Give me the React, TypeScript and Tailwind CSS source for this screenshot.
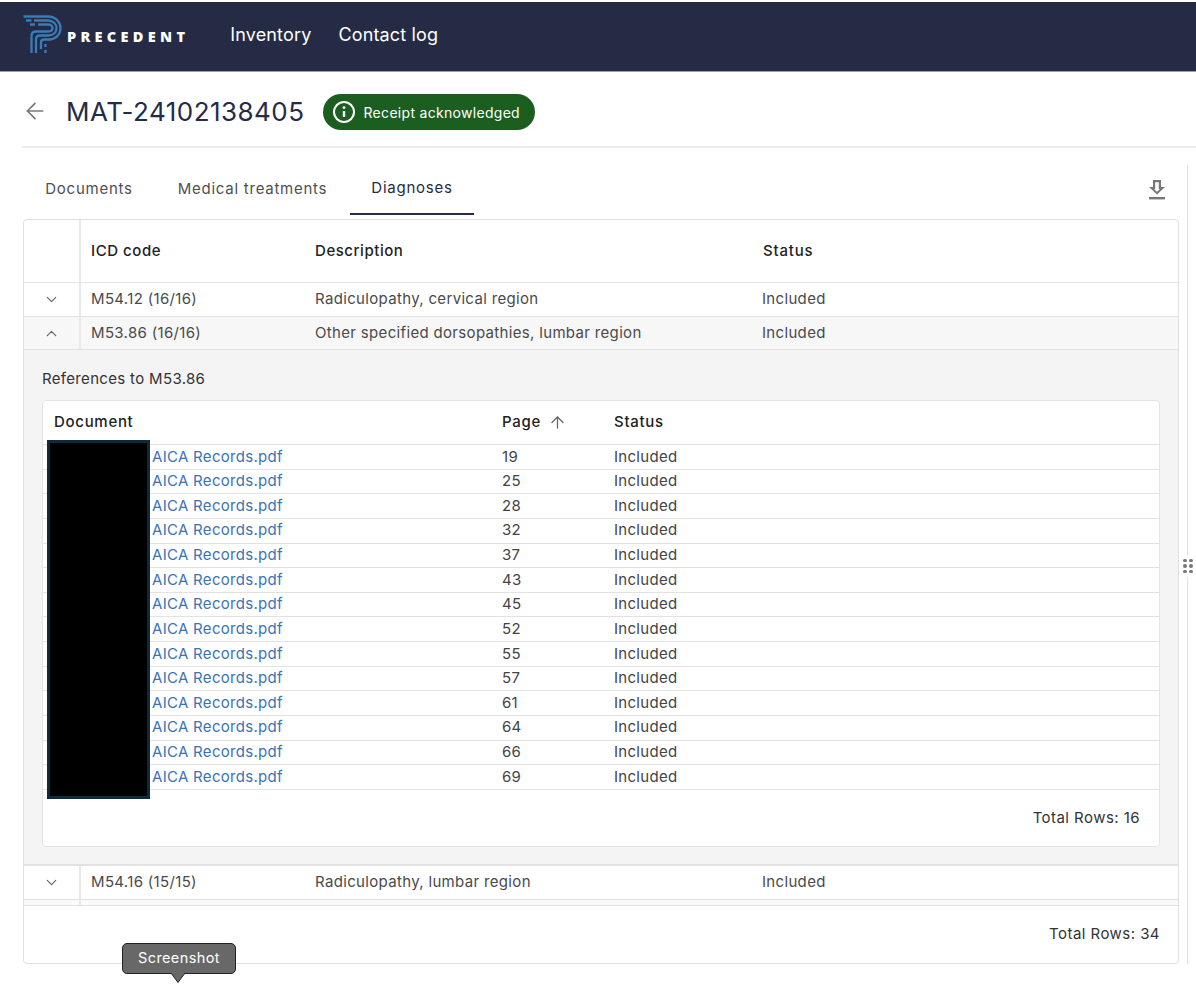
import React from "react";
import { ArrowLeft, ArrowUp, ChevronDown, ChevronUp } from "lucide-react";

const pages = [19, 25, 28, 32, 37, 43, 45, 52, 55, 57, 61, 64, 66, 69];

function Logo() {
  return (
    <svg width="40" height="40" viewBox="0 0 40 40" fill="none" stroke="#3b7cb8" strokeWidth="2.3" className="mb-[3px] shrink-0">
      <path d="M1.5 1.5H26C33.5 1.5 38.5 7 38.5 13C38.5 20 33 24.5 27 24.5H22C20 24.5 19 25.5 19 27.5V34" />
      <path d="M12 5.5H26C31 5.5 34.5 9 34.5 13C34.5 17.5 31 20.5 26 20.5H18C15.5 20.5 14 22 14 24.5V38" />
      <path d="M16 9.5H26C28.5 9.5 30.5 11 30.5 13C30.5 15.5 28.5 16.5 26 16.5H14C11 16.5 9.5 18.5 9.5 21V38" />
      <path d="M4 5.5H9.5M8 9.5H13M23.5 29V32M23.5 35V38" />
    </svg>
  );
}

function OuterRow({ code, desc, open }: { code: string; desc: string; open?: boolean }) {
  return (
    <div className={`grid grid-cols-[55px_2px_234px_447px_1fr] items-center border-b border-[#e2e2e2] text-[15px] tracking-[0.33px] text-[#4a4a4a] ${open ? "h-[33px] bg-[#f7f7f7]" : "h-[34px] bg-white"}`}>
      <div className="flex justify-center pr-[1px] text-[#666666]">
        {open ? <ChevronUp size={17} strokeWidth={1.7} /> : <ChevronDown size={17} strokeWidth={1.7} />}
      </div>
      <div className="h-full bg-[#e9e9e9]" />
      <div className="pl-[10px]">{code}</div>
      <div>{desc}</div>
      <div>Included</div>
    </div>
  );
}

export default function App() {
  return (
    <div className="relative h-[984px] w-[1196px] overflow-hidden bg-white pt-[2px] font-['Inter',sans-serif] text-[#222222]">
      <header className="flex h-[70px] items-center border-b border-[#9aa0ac] bg-[#252b45] pl-[22px]">
        <Logo />
        <span className="ml-[5px] font-['Open_Sans',sans-serif] text-[14.5px] font-extrabold tracking-[4.3px] text-white">PRECEDENT</span>
        <nav className="mb-[4px] ml-[41px] flex gap-[27px] text-[18px] tracking-[0.15px] text-white">
          <span>Inventory</span>
          <span>Contact log</span>
        </nav>
      </header>

      <div className="ml-[22px] flex h-[76px] items-center border-b-2 border-[#ececec] pt-[4px]">
        <ArrowLeft size={26} strokeWidth={1.6} className="text-[#777777]" />
        <h1 className="ml-[18px] text-[26px] tracking-[0.47px] text-[#252b45]">MAT-24102138405</h1>
        <div className="ml-[18px] mt-[2px] flex h-[36px] w-[212px] items-center rounded-full bg-[#1b5e20] pl-[9px] text-[14px] tracking-[0.3px] text-white">
          <svg width="24" height="24" viewBox="0 0 24 24" fill="none" stroke="white" strokeWidth="2">
            <circle cx="12" cy="12" r="10" />
            <path d="M12 11V17" strokeWidth="2.4" />
            <circle cx="12" cy="7.6" r="1.4" fill="white" stroke="none" />
          </svg>
          <span className="ml-[8px]">Receipt acknowledged</span>
        </div>
      </div>

      <div className="ml-[23px] w-[1156px]">
        <div className="flex h-[67px] items-stretch text-[15px] tracking-[0.75px] text-[#4f4f4f]">
          <div className="flex w-[132px] items-center justify-center pt-[16px]">Documents</div>
          <div className="flex w-[195px] items-center justify-center pt-[16px]">Medical treatments</div>
          <div className="flex w-[124px] items-center justify-center border-b-2 border-[#252b45] pt-[16px] text-[#252b45]">Diagnoses</div>
          <div className="ml-auto flex w-[44px] items-center justify-center pt-[16px] text-[#777777]">
            <svg width="20" height="22" viewBox="0 0 20 22" fill="#777777">
              <path d="M6 1H14V8H18L10 15.5L2 8H6ZM8.2 3.2V10.2H7L10 12.7L13 10.2H11.8V3.2Z" fillRule="evenodd" />
              <rect x="2" y="18" width="16" height="2.4" />
            </svg>
          </div>
        </div>

        <div className="mt-[4px] h-[745px] overflow-hidden rounded-[4px] border border-[#e0e0e0] bg-white">
          <div className="grid h-[63px] grid-cols-[55px_2px_234px_447px_1fr] items-center border-b border-[#e2e2e2] text-[15px] font-medium tracking-[0.55px] text-[#222222]">
            <div />
            <div className="h-full bg-[#e9e9e9]" />
            <div className="pl-[10px]">ICD code</div>
            <div>Description</div>
            <div className="pl-[1px] tracking-[0.8px]">Status</div>
          </div>
          <OuterRow code="M54.12 (16/16)" desc="Radiculopathy, cervical region" />
          <OuterRow code="M53.86 (16/16)" desc="Other specified dorsopathies, lumbar region" open />

          <div className="h-[516px] border-b-2 border-[#e2e2e2] bg-[#f4f4f4] px-[18px] pt-[20px]">
            <div className="text-[15px] leading-[18px] tracking-[0.33px] text-[#333333]">References to M53.86</div>
            <div className="mt-[12px] h-[447px] w-[1118px] rounded-[4px] border border-[#e4e4e4] bg-white">
              <div className="grid h-[44px] grid-cols-[448px_112px_1fr] items-center border-b border-[#e2e2e2] pl-[11px] text-[15px] font-medium tracking-[0.7px]">
                <div>Document</div>
                <div className="flex items-center gap-[7px]">
                  Page <ArrowUp size={19} strokeWidth={1.6} className="text-[#666666]" />
                </div>
                <div>Status</div>
              </div>
              {pages.map((p) => (
                <div key={p} className="grid h-[24.64px] grid-cols-[448px_112px_1fr] items-center border-b border-[#e2e2e2] pl-[11px] text-[15px] tracking-[0.3px] text-[#444444]">
                  <div className="pl-[98px] text-[#3a74b4]">AICA Records.pdf</div>
                  <div>{p}</div>
                  <div>Included</div>
                </div>
              ))}
              <div className="flex h-[57px] items-center justify-end pr-[19px] text-[15px] tracking-[0.45px] text-[#333333]">Total Rows: 16</div>
            </div>
          </div>

          <OuterRow code="M54.16 (15/15)" desc="Radiculopathy, lumbar region" />
          <div className="grid h-[6px] grid-cols-[55px_2px_1fr] border-b border-[#e2e2e2] bg-[#fafafa]">
            <div />
            <div className="bg-[#e9e9e9]" />
            <div />
          </div>
          <div className="flex h-[57px] items-center justify-end pr-[18px] text-[15px] tracking-[0.45px] text-[#333333]">Total Rows: 34</div>
        </div>
      </div>

      <div className="absolute left-[47px] top-[440px] h-[359px] w-[103px] border-[3px] border-[#0b2a3c] bg-black" />

      <div className="absolute bottom-[20px] left-[1187px] top-[165px] w-[1px] bg-[#e0e0e0]" />
      <div className="absolute left-[1182px] top-[555px] grid h-[22px] w-[12px] grid-cols-2 content-center justify-items-center gap-y-[2px] bg-white">
        {[0, 1, 2, 3, 4, 5].map((i) => (
          <span key={i} className="h-[3.5px] w-[3.5px] rounded-full bg-[#777777]" />
        ))}
      </div>

      <div className="absolute left-[122px] top-[943px] flex h-[31px] w-[114px] items-center justify-center rounded-[5px] border border-[#222222] bg-[#686868] pb-[2px] text-[14.5px] tracking-[0.4px] text-white">
        Screenshot
      </div>
      <svg className="absolute left-[170px] top-[973px]" width="16" height="11" viewBox="0 0 16 11">
        <path d="M1 0L8 9.5L15 0" fill="#686868" stroke="#222222" strokeWidth="1" />
      </svg>
    </div>
  );
}
